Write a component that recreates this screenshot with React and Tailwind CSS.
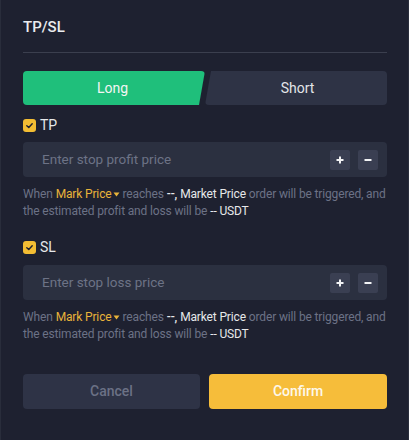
import React from "react";

const font = { fontFamily: "Roboto, 'Noto Sans', sans-serif" };

function Check() {
  return (
    <span className="w-[13px] h-[13px] rounded-[3px] bg-[#f3bd33] flex items-center justify-center">
      <svg width="9" height="9" viewBox="0 0 10 10">
        <path d="M2 5.2 L4.2 7.2 L8 3" fill="none" stroke="#1e2130" strokeWidth="1.6" strokeLinecap="round" strokeLinejoin="round" />
      </svg>
    </span>
  );
}

function PriceInput({ placeholder }) {
  return (
    <div className="h-[35px] rounded-[4px] bg-[#2b3040] flex items-center pl-[19px] pr-[9px]">
      <span className="flex-1 text-[13.5px] text-[#6d7386]">{placeholder}</span>
      <div className="flex gap-[8px]">
        <span className="w-[20px] h-[20px] rounded-[2px] bg-[#3a3f52] flex items-center justify-center">
          <svg width="10" height="10" viewBox="0 0 10 10">
            <path d="M5 1.5 V8.5 M1.5 5 H8.5" stroke="#f2f3f5" strokeWidth="2" />
          </svg>
        </span>
        <span className="w-[20px] h-[20px] rounded-[2px] bg-[#3a3f52] flex items-center justify-center">
          <svg width="10" height="10" viewBox="0 0 10 10">
            <path d="M1.5 5 H8.5" stroke="#f2f3f5" strokeWidth="2" />
          </svg>
        </span>
      </div>
    </div>
  );
}

function Helper() {
  return (
    <div className="text-[12px] leading-[17px] tracking-[-0.15px] text-[#6c7286] whitespace-nowrap">
      <div className="flex items-center gap-[3px]">
        <span>When</span>
        <span className="flex items-center text-[#e8b33a]">
          Mark Price
          <svg width="7" height="5" viewBox="0 0 7 5" className="ml-[1px]">
            <path d="M0.5 0.5 H6.5 L3.5 4.5 Z" fill="#e8b33a" />
          </svg>
        </span>
        <span>reaches</span>
        <span className="text-[#e6e8ea] font-medium">--,</span>
        <span className="text-[#e6e8ea]">Market Price</span>
        <span>order will be triggered, and</span>
      </div>
      <div className="flex items-center gap-[3px]">
        <span>the estimated profit and loss will be</span>
        <span className="text-[#e6e8ea]">-- USDT</span>
      </div>
    </div>
  );
}

export default function App() {
  return (
    <div style={font} className="w-[409px] h-[440px] bg-[#1e2130] border-x border-[#292d3b] pl-[22px] pr-[21px] flex flex-col">
      <div className="mt-[17px] h-[20px] flex items-center text-[15px] font-medium text-[#eaecef]">TP/SL</div>
      <div className="mt-[15px] h-px bg-[#3b3f4e]" />
      <div className="mt-[18px] h-[34px] flex">
        <div className="w-[182px] h-full rounded-[4px] bg-[#1fbf7b] flex items-center justify-center text-[14px] text-[#f3f5f4] [clip-path:polygon(0_0,100%_0,calc(100%_-_6px)_100%,0_100%)]">
          <span className="mr-[3px]">Long</span>
        </div>
        <div className="flex-1 h-full rounded-[4px] bg-[#2e3345] flex items-center justify-center text-[14px] text-[#e3e5e8] [clip-path:polygon(6px_0,100%_0,100%_100%,0_100%)]">
          <span className="ml-[3px]">Short</span>
        </div>
      </div>
      <div className="mt-[12px] h-[16px] flex items-center gap-[4px]">
        <Check />
        <span className="text-[14px] text-[#e6e8ea]">TP</span>
      </div>
      <div className="mt-[9px]">
        <PriceInput placeholder="Enter stop profit price" />
      </div>
      <div className="mt-[9px]">
        <Helper />
      </div>
      <div className="mt-[19px] h-[16px] flex items-center gap-[4px]">
        <Check />
        <span className="text-[14px] text-[#e6e8ea]">SL</span>
      </div>
      <div className="mt-[10px]">
        <PriceInput placeholder="Enter stop loss price" />
      </div>
      <div className="mt-[9px]">
        <Helper />
      </div>
      <div className="mt-[31px] h-[35px] flex gap-[9px]">
        <button className="w-[177px] h-full rounded-[4px] bg-[#2e3346] text-[14px] font-medium text-[#6b7185]">Cancel</button>
        <button className="flex-1 h-full rounded-[4px] bg-[#f6bd3a] text-[14px] font-medium text-[#fdf8ec]">Confirm</button>
      </div>
    </div>
  );
}
